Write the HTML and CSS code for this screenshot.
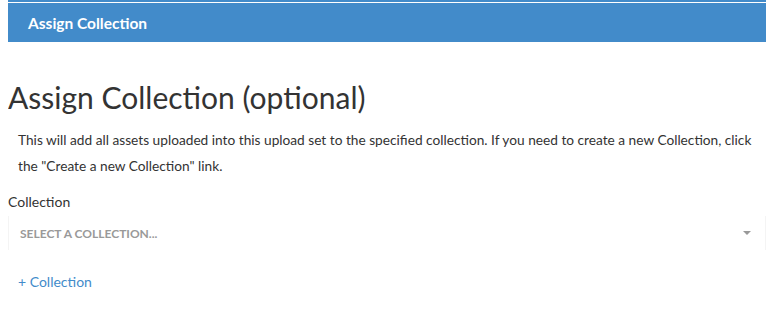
FILE: index.html
```html
<!DOCTYPE html>
<html lang="en">
  <head>
    <title>Assign Collection</title>
    <meta charset="UTF-8">
    <link rel="stylesheet" href="styles.css">
  </head>
  <body>
    <div class="panel">
      <div class="panel-title">Assign Collection</div>
    </div>

    <h1>Assign Collection (optional)</h1>
    <p class="help">This will add all assets uploaded into this upload set to the specified collection. If you need to create a new Collection, click the "Create a new Collection" link.</p>

    <label class="label">Collection</label>
    <div class="select">
      <span class="placeholder">Select a collection...</span>
      <span class="caret"></span>
    </div>

    <a class="add" href="#">+ Collection</a>
  </body>
</html>
```

FILE: styles.css
```css
body {
  margin: 0 5px 0 8px;
  font-family: Lato, "Open Sans", sans-serif;
  color: #333;
  background: white;
}

.panel {
  border-top: 2px solid #428bca;
  padding-top: 1px;
}

.panel-title {
  background: #428bca;
  color: white;
  font-weight: bold;
  font-size: 15.5px;
  height: 39px;
  line-height: 40px;
  padding-left: 20px;
}

h1 {
  font-weight: normal;
  font-size: 30px;
  margin: 37px 0 0 0;
  line-height: 36px;
}

.help {
  font-size: 13.7px;
  line-height: 26px;
  margin: 12px 0 0 10px;
}

.label {
  display: block;
  font-size: 14px;
  margin-top: 13px;
  line-height: 20px;
}

.select {
  display: flex;
  align-items: center;
  justify-content: space-between;
  height: 34px;
  margin-top: 4px;
  padding: 0 14px 0 11px;
  border-left: 1px solid #f4f4f4;
  border-right: 1px solid #f4f4f4;
}

.placeholder {
  text-transform: uppercase;
  font-weight: bold;
  font-size: 12px;
  color: #999;
}

.caret {
  width: 0;
  height: 0;
  border-left: 4px solid transparent;
  border-right: 4px solid transparent;
  border-top: 4px solid #999;
}

.add {
  display: inline-block;
  margin: 23px 0 0 10px;
  font-size: 14px;
  color: #428bca;
  text-decoration: none;
}
```
